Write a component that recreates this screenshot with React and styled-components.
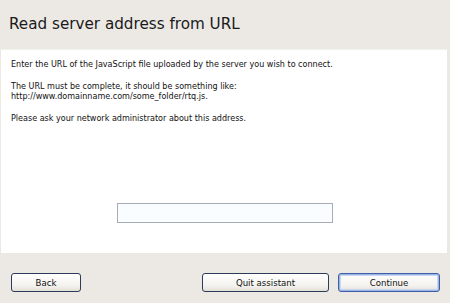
import React from "react";
import styled, { createGlobalStyle } from "styled-components";

const Global = createGlobalStyle`
  html, body { margin: 0; padding: 0; background: #ece9e5; }
  body { width: 450px; height: 303px; overflow: hidden; font-family: Tahoma, "DejaVu Sans", sans-serif; }
`;

const Frame = styled.div`
  width: 450px;
  height: 303px;
  display: flex;
  flex-direction: column;
  background: #ece9e5;
`;

const Header = styled.div`
  height: 49px;
  display: flex;
  align-items: center;
  padding: 0 0 2px 9px;
  box-sizing: border-box;
`;

const Title = styled.h1`
  margin: 0;
  font-family: "DejaVu Sans", sans-serif;
  font-weight: normal;
  font-size: 15.2px;
  color: #1a1a1a;
`;

const Panel = styled.div`
  margin: 0 3px 0 1px;
  height: 204px;
  background: #ffffff;
  border-top: 1px solid #f1f3e8;
  box-sizing: border-box;
  padding: 10px 9px 0 10px;
  display: flex;
  flex-direction: column;
`;

const Para = styled.p`
  margin: 0 0 12px 0;
  font-family: "DejaVu Sans", sans-serif;
  font-size: 8.05px;
  line-height: 10px;
  color: #111;
`;

const InputRow = styled.div`
  margin-top: auto;
  margin-bottom: 30px;
  display: flex;
`;

const UrlInput = styled.input`
  width: 216px;
  height: 20px;
  box-sizing: border-box;
  border: 1px solid #a5acb5;
  background: #f9fdff;
  margin-left: 106px;
  outline: none;
`;

const Footer = styled.div`
  flex: 1;
  display: flex;
  align-items: flex-start;
  padding: 20px 10px 0 11px;
  gap: 9px;
`;

const Button = styled.button`
  width: ${(p) => p.$w}px;
  height: 19px;
  box-sizing: border-box;
  border-radius: 3px;
  border: 1px solid ${(p) => (p.$primary ? "#3d5fa6" : "#2d3b5a")};
  background: linear-gradient(#ffffff, #f3f2ee 70%, #e2dfd6);
  font-family: "DejaVu Sans", sans-serif;
  font-size: 8.6px;
  color: #111;
  padding: 0;
  ${(p) =>
    p.$primary &&
    `box-shadow: inset 0 0 0 1px #9db4e4, inset 0 0 0 2px #c6d6f3;`}
`;

const Spacer = styled.div`
  flex: 1;
`;

export default function App() {
  return (
    <Frame>
      <Global />
      <Header>
        <Title>Read server address from URL</Title>
      </Header>
      <Panel>
        <Para>Enter the URL of the JavaScript file uploaded by the server you wish to connect.</Para>
        <Para>
          The URL must be complete, it should be something like:
          <br />
          http://www.domainname.com/some_folder/rtq.js.
        </Para>
        <Para>Please ask your network administrator about this address.</Para>
        <InputRow>
          <UrlInput type="text" />
        </InputRow>
      </Panel>
      <Footer>
        <Button $w={70}>Back</Button>
        <Spacer />
        <Button $w={127}>Quit assistant</Button>
        <Button $w={102} $primary>Continue</Button>
      </Footer>
    </Frame>
  );
}
